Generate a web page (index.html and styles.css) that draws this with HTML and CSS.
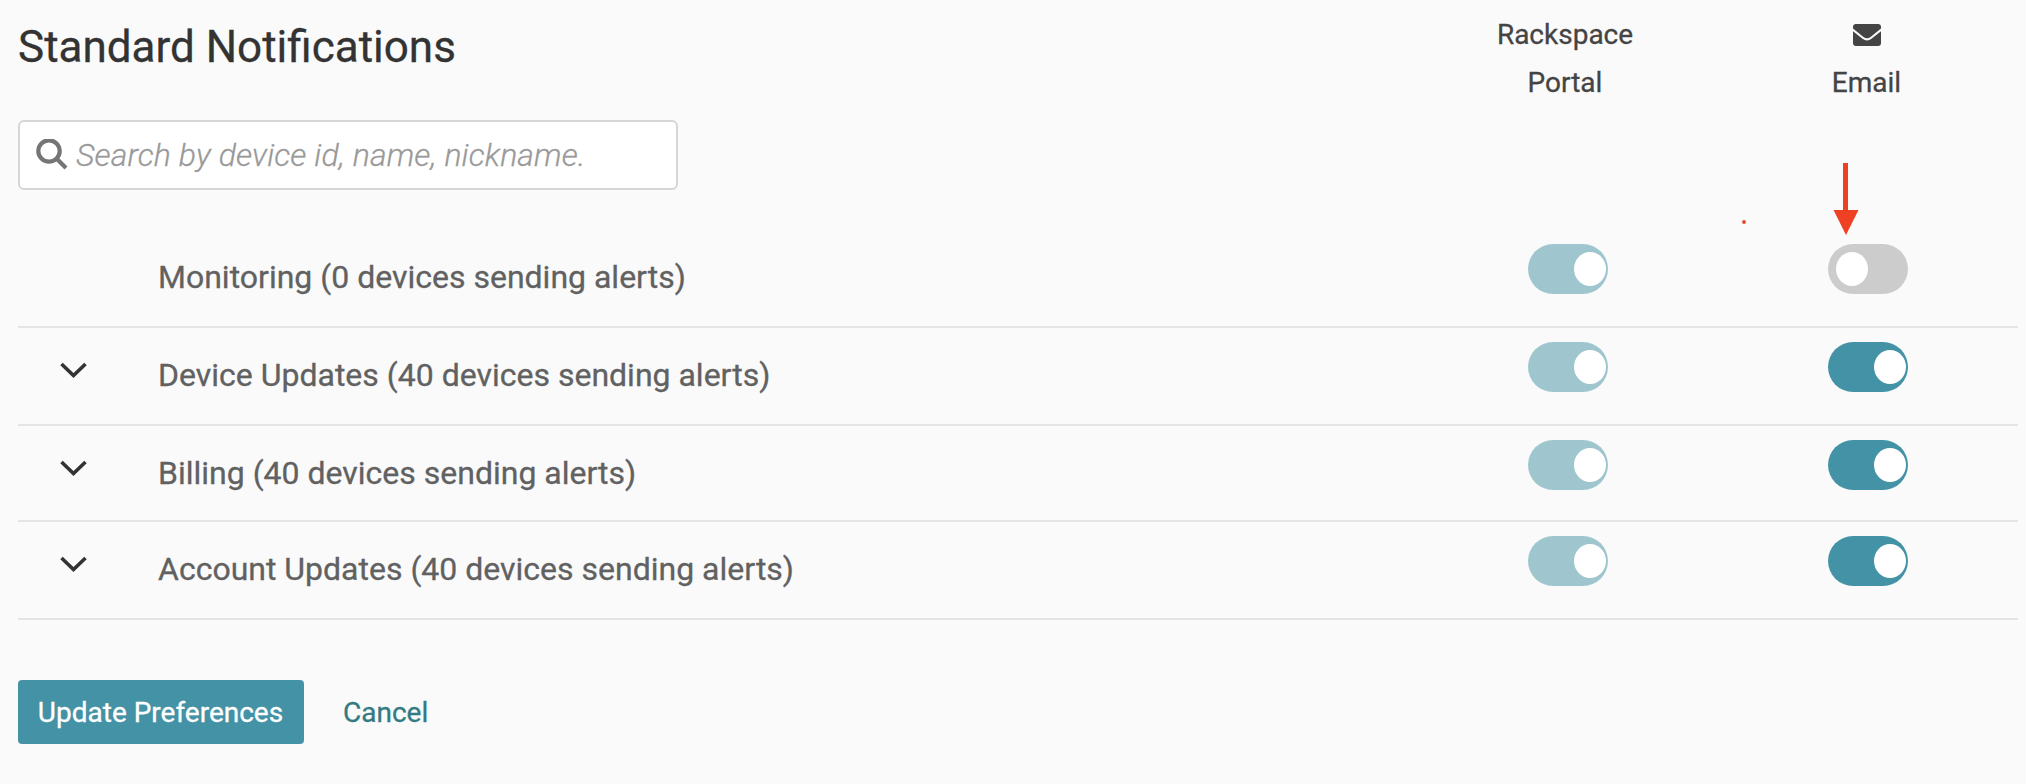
FILE: index.html
```html
<!DOCTYPE html>
<html lang="en">
<head>
<meta charset="utf-8">
<title>Standard Notifications</title>
<link rel="stylesheet" href="styles.css">
</head>
<body>
<main class="page">
  <header class="head">
    <div class="head-main">
      <h1 class="title">Standard Notifications</h1>
      <label class="search">
        <svg class="search-icon" viewBox="0 0 32 32"><circle cx="13" cy="12" r="10.700"/><path d="M20.500 19.500L30 29"/></svg>
        <input class="search-input" type="text" placeholder="Search by device id, name, nickname.">
      </label>
    </div>
    <div class="col-head portal">Rackspace<br>Portal</div>
    <div class="col-head email">
      <svg class="mail" viewBox="0 0 28 22"><path d="M3 0H25Q28 0 28 3V4.500L17.500 13Q14 15.500 10.500 13L0 4.500V3Q0 0 3 0Z"/><path d="M0 7.300L9.500 14.800Q14 18 18.500 14.800L28 7.300V19Q28 22 25 22H3Q0 22 0 19Z"/></svg>
      <span>Email</span>
    </div>
  </header>
  <section class="rows">
    <div class="row">
      <span class="expand"></span>
      <span class="label">Monitoring (0 devices sending alerts)</span>
      <span class="toggle locked"></span>
      <span class="toggle off"></span>
    </div>
    <div class="row">
      <span class="expand"><svg class="chevron" viewBox="0 0 28 18"><path d="M1.500 2L13.500 13.500L25.500 2"/></svg></span>
      <span class="label">Device Updates (40 devices sending alerts)</span>
      <span class="toggle locked"></span>
      <span class="toggle"></span>
    </div>
    <div class="row short">
      <span class="expand"><svg class="chevron" viewBox="0 0 28 18"><path d="M1.500 2L13.500 13.500L25.500 2"/></svg></span>
      <span class="label">Billing (40 devices sending alerts)</span>
      <span class="toggle locked"></span>
      <span class="toggle"></span>
    </div>
    <div class="row">
      <span class="expand"><svg class="chevron" viewBox="0 0 28 18"><path d="M1.500 2L13.500 13.500L25.500 2"/></svg></span>
      <span class="label">Account Updates (40 devices sending alerts)</span>
      <span class="toggle locked"></span>
      <span class="toggle"></span>
    </div>
  </section>
  <footer class="actions">
    <button class="update">Update Preferences</button>
    <a class="cancel">Cancel</a>
  </footer>
  <svg class="annotation" viewBox="0 0 120 76"><circle cx="4" cy="59" r="1.900"/><path d="M103 0H108V47H118.500L106 72L93.500 47H103Z"/></svg>
</main>
</body>
</html>
```
FILE: styles.css
```css
* { box-sizing: border-box; }
body {
  margin: 0;
  background: #fafafa;
  font-family: Roboto, "Liberation Sans", sans-serif;
  -webkit-text-stroke: 0.3px currentColor;
}
.page {
  position: relative;
  height: 784px;
  padding: 0 8px 0 18px;
  overflow: hidden;
}
.head {
  display: grid;
  grid-template-columns: 1397px 300px 303px;
  height: 230px;
}
.head-main { padding-top: 21px; }
.title {
  margin: 0 0 47px;
  font-size: 44px;
  font-weight: 400;
  line-height: 52px;
  color: #333;
}
.search {
  display: flex;
  align-items: center;
  width: 660px;
  height: 70px;
  padding: 0 16px;
  border: 2px solid #d6d6d6;
  border-radius: 6px;
  background: #fff;
}
.search-icon {
  width: 32px;
  height: 32px;
  margin-right: 8px;
  fill: none;
  stroke: #757575;
  stroke-width: 4.2;
}
.search-input {
  flex: 1;
  min-width: 0;
  padding: 0;
  border: 0;
  outline: 0;
  background: none;
  font: italic 300 32px/40px Roboto, "Liberation Sans", sans-serif;
  letter-spacing: 0.12px;
}
.search-input::placeholder { color: #999; opacity: 1; }
.col-head {
  padding-top: 11px;
  font-size: 28px;
  line-height: 48px;
  color: #444;
  text-align: center;
}
.email {
  display: flex;
  flex-direction: column;
  align-items: center;
}
.mail {
  width: 28px;
  height: 22px;
  margin: 13px 0 13px;
  fill: #444;
}
.row {
  display: grid;
  grid-template-columns: 140px 1370px 300px 190px;
  height: 98px;
  padding-top: 14px;
  border-bottom: 2px solid #e5e5e5;
}
.short { height: 96px; }
.expand { padding: 20px 0 0 42px; }
.chevron {
  display: block;
  width: 28px;
  height: 18px;
  fill: none;
  stroke: #333;
  stroke-width: 3.6;
}
.label {
  padding-top: 14px;
  font-size: 32px;
  line-height: 38px;
  color: #616161;
}
.toggle {
  display: flex;
  justify-content: flex-end;
  width: 80px;
  height: 50px;
  padding: 8px 2px 8px 8px;
  border-radius: 25px;
  background: #4492a5;
}
.toggle::after {
  content: "";
  width: 32px;
  height: 34px;
  border-radius: 50%;
  background: #fff;
}
.locked { background: #9fc6cf; }
.off { justify-content: flex-start; background: #ccc; }
.actions {
  display: flex;
  gap: 39px;
  align-items: center;
  margin-top: 60px;
  height: 64px;
}
.update {
  width: 286px;
  height: 64px;
  padding: 1px 1px 0 0;
  border: 0;
  border-radius: 4px;
  background: #4492a5;
  color: #fff;
  font: 28px/63px Roboto, "Liberation Sans", sans-serif;
}
.cancel {
  font-size: 28px;
  color: #337a84;
}
/* Callout arrow laid over the email column */
.annotation {
  position: absolute;
  left: 1740px;
  top: 163px;
  width: 120px;
  height: 76px;
  fill: #ee4023;
}
```
